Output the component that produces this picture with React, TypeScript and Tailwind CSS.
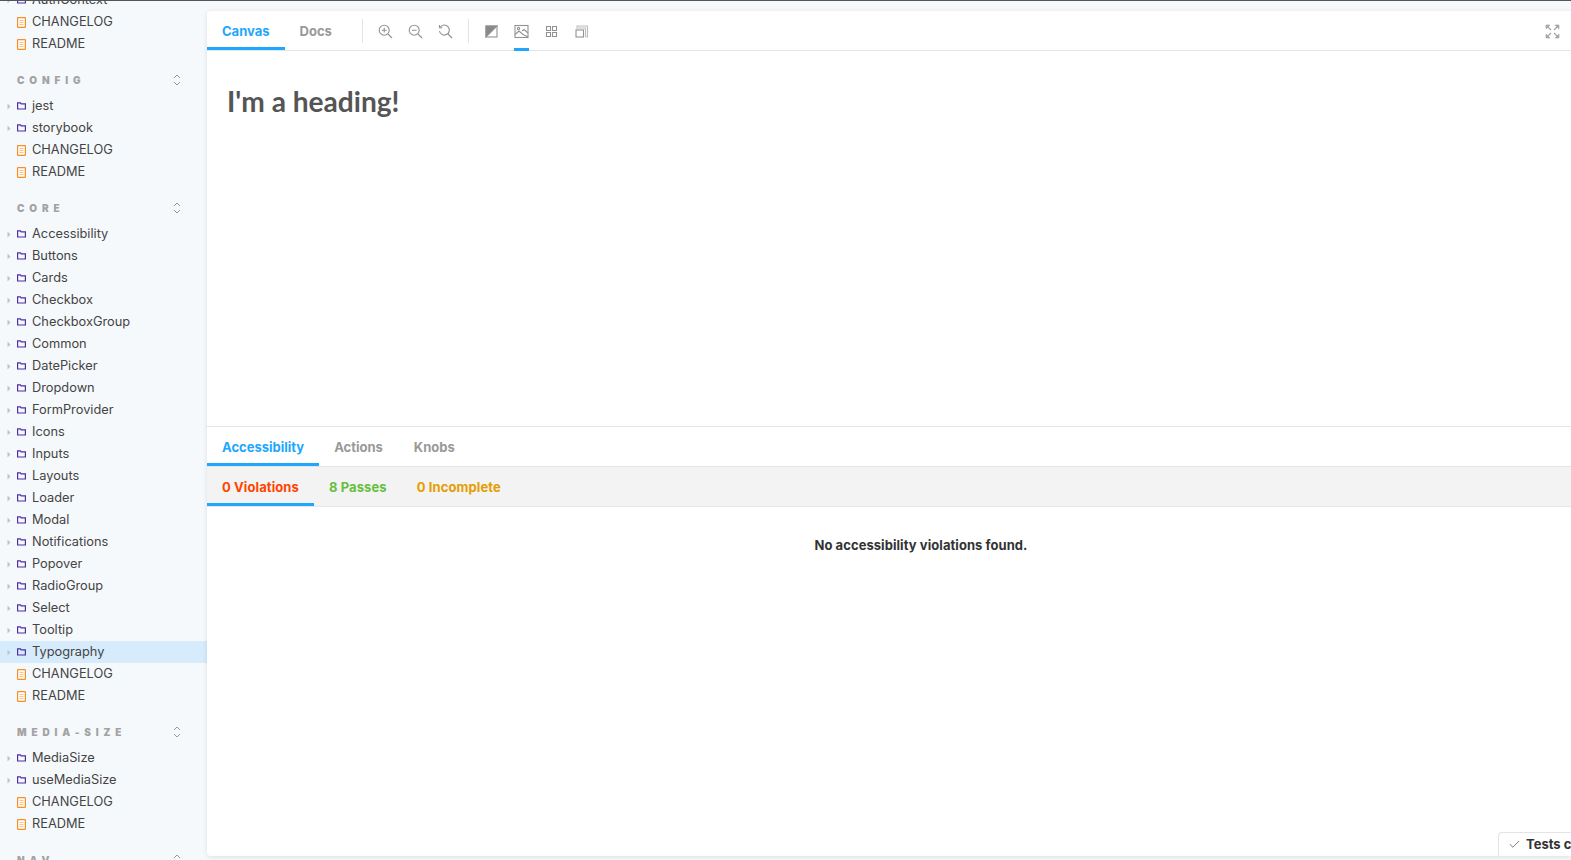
import React from "react";
import { Check } from "lucide-react";

const configItems = ["jest", "storybook"];
const coreItems = [
  "Accessibility", "Buttons", "Cards", "Checkbox", "CheckboxGroup", "Common", "DatePicker", "Dropdown",
  "FormProvider", "Icons", "Inputs", "Layouts", "Loader", "Modal", "Notifications", "Popover",
  "RadioGroup", "Select", "Tooltip", "Typography",
];
const mediaItems = ["MediaSize", "useMediaSize"];

const FolderRow = ({ name, active }: { name: string; active?: boolean }) => (
  <div className={`flex h-[22px] items-center ${active ? "bg-[#d6ebfb]" : ""}`}>
    <svg width="4" height="7" viewBox="0 0 4 7" className="ml-[7px] shrink-0">
      <path d="M0.5 0.5 L3.5 3.5 L0.5 6.5 Z" fill="#c4c4c4" />
    </svg>
    <svg width="9" height="8" viewBox="0 0 9 8" className="ml-[6px] shrink-0">
      <path d="M0.6 7 V0.8 H3.4 L4.2 1.9 H8.4 V7 Z" fill="none" stroke="#4f2ea8" strokeWidth="1.2" />
    </svg>
    <span className="ml-[6px] text-[12.8px] text-[#444]">{name}</span>
  </div>
);

const DocRow = ({ name }: { name: string }) => (
  <div className="flex h-[22px] items-center">
    <svg width="9" height="11" viewBox="0 0 9 11" className="ml-[17px] shrink-0">
      <rect x="0.6" y="0.6" width="7.8" height="9.8" rx="0.6" fill="#fff" stroke="#fb8c1e" strokeWidth="1.2" />
      <path d="M2.4 3.5 H6.6 M2.4 5.5 H6.6 M2.4 7.5 H6.6" stroke="#fbb26e" strokeWidth="0.8" />
    </svg>
    <span className="ml-[6px] text-[12.8px] text-[#444]">{name}</span>
  </div>
);

const SectionHead = ({ label }: { label: string }) => (
  <div className="flex h-[40px] items-center justify-between pl-[17px] pr-[26px] pt-[10px]">
    <span className="text-[10px] font-black uppercase tracking-[4.85px] text-[#a3a3a3]">{label}</span>
    <svg width="8" height="12" viewBox="0 0 8 12" fill="none" stroke="#999" strokeWidth="1">
      <path d="M1 4 L4 1 L7 4 M1 8 L4 11 L7 8" />
    </svg>
  </div>
);

const ToolIcon = ({ children, active }: { children: React.ReactNode; active?: boolean }) => (
  <div className={`flex h-[40px] w-[30px] items-center justify-center ${active ? "relative" : ""}`}>
    <svg width="15" height="15" viewBox="0 0 15 15" fill="none" stroke="#929292" strokeWidth="1.1">
      {children}
    </svg>
    {active && <div className="absolute bottom-0 left-[7px] h-[3px] w-[15px] bg-[#1ea7fd]" />}
  </div>
);

const Tab = ({ label, active, color, className }: { label: string; active?: boolean; color: string; className?: string }) => (
  <div
    className={`flex items-center border-y-[3px] border-t-transparent px-[15px] pt-[2px] text-[13px] font-bold ${
      active ? "border-b-[#1ea7fd]" : "border-b-transparent"
    } ${color} ${className ?? ""}`}
  >
    {label}
  </div>
);

export default function App() {
  return (
    <div className="relative flex h-[860px] w-full flex-col overflow-hidden bg-[#f6f9fc] [font-family:Inter,sans-serif]">
      <div className="h-px shrink-0 bg-[#555]" />
      <div className="flex min-h-0 flex-1">
        <aside className="w-[207px] shrink-0 overflow-hidden">
          <div className="mt-[-12px]">
            <FolderRow name="AuthContext" />
            <DocRow name="CHANGELOG" />
            <DocRow name="README" />
            <SectionHead label="Config" />
            {configItems.map((n) => (
              <FolderRow key={n} name={n} />
            ))}
            <DocRow name="CHANGELOG" />
            <DocRow name="README" />
            <SectionHead label="Core" />
            {coreItems.map((n) => (
              <FolderRow key={n} name={n} active={n === "Typography"} />
            ))}
            <DocRow name="CHANGELOG" />
            <DocRow name="README" />
            <SectionHead label="Media-size" />
            {mediaItems.map((n) => (
              <FolderRow key={n} name={n} />
            ))}
            <DocRow name="CHANGELOG" />
            <DocRow name="README" />
            <SectionHead label="Nav" />
          </div>
        </aside>

        <main className="mb-[4px] mt-[10px] flex min-w-0 flex-1 flex-col overflow-hidden rounded-l-[4px] bg-white shadow-[0_1px_5px_0_rgba(0,0,0,0.1)]">
          <div className="flex h-[40px] shrink-0 items-stretch border-b border-[#e4e4e4]">
            <Tab label="Canvas" active color="text-[#1ea7fd]" />
            <Tab label="Docs" color="text-[#999]" />
            <div className="ml-[15px] mr-[8px] mt-[8px] h-[24px] w-px bg-[#e4e4e4]" />
            <ToolIcon>
              <circle cx="6.2" cy="6.2" r="5" />
              <path d="M10 10 L14 14 M3.8 6.2 H8.6 M6.2 3.8 V8.6" />
            </ToolIcon>
            <ToolIcon>
              <circle cx="6.2" cy="6.2" r="5" />
              <path d="M10 10 L14 14 M3.8 6.2 H8.6" />
            </ToolIcon>
            <ToolIcon>
              <path d="M2.2 3.2 A5 5 0 1 1 1.4 7" />
              <path d="M1.5 1 V3.8 H4.3" />
              <path d="M10 10 L14 14" />
            </ToolIcon>
            <div className="ml-[7px] mr-[8px] mt-[8px] h-[24px] w-px bg-[#e4e4e4]" />
            <ToolIcon>
              <rect x="2" y="2" width="11" height="11" />
              <path d="M2 13 V2 H13 Z" fill="#888" />
            </ToolIcon>
            <ToolIcon active>
              <rect x="1" y="1.5" width="13" height="12" />
              <circle cx="4.5" cy="4.5" r="1.1" />
              <path d="M1 10.5 L5 7 L9 10.5 L14 13 M8 7 L10 5.5 L14 9" />
            </ToolIcon>
            <ToolIcon>
              <path d="M2.5 2.5 H6.5 V6.5 H2.5 Z M8.5 2.5 H12.5 V6.5 H8.5 Z M2.5 8.5 H6.5 V12.5 H2.5 Z M8.5 8.5 H12.5 V12.5 H8.5 Z" />
            </ToolIcon>
            <ToolIcon>
              <path d="M3 3 V2 H13.5 V13 H12" stroke="#bbb" />
              <rect x="2" y="6" width="7.5" height="7" />
              <path d="M2 4 H11.5 V13" stroke="#bbb" />
            </ToolIcon>
            <div className="ml-auto mr-[4px] flex h-[40px] w-[30px] items-center justify-center">
              <svg width="15" height="15" viewBox="0 0 15 15" fill="none" stroke="#a6a6a6" strokeWidth="1.2">
                <path d="M2 2 L6 6 M9 6 L13 2 M2 13 L6 9 M9 9 L13 13" />
                <path d="M1 5 V1 H5 Z M10 1 H14 V5 Z M1 10 V14 H5 Z M14 10 V14 H10 Z" fill="#a6a6a6" strokeWidth="0.6" />
              </svg>
            </div>
          </div>

          <div className="h-[376px] shrink-0 border-b border-[#e4e4e4] pl-[20px] pt-[30px]">
            <h1 className="text-[28.1px] font-bold leading-[40px] text-[#555] [font-family:Lato,sans-serif]">I'm a heading!</h1>
          </div>

          <div className="flex h-[40px] shrink-0 items-stretch border-b border-[#e4e4e4]">
            <Tab label="Accessibility" active color="text-[#1ea7fd]" />
            <Tab label="Actions" color="text-[#999]" />
            <Tab label="Knobs" color="text-[#999]" className="ml-px" />
          </div>

          <div className="flex h-[40px] shrink-0 items-stretch border-b border-[#e4e4e4] bg-[#f3f3f3]">
            <Tab label="0 Violations" active color="text-[#ff4400] tracking-[0.1px]" />
            <Tab label="8 Passes" color="text-[#66bf3c] tracking-[0.1px]" />
            <Tab label="0 Incomplete" color="text-[#e69d00] tracking-[0.1px]" />
          </div>

          <div className="w-[1428px] pt-[29px] text-center text-[13px] font-bold tracking-[0.06px] text-[#333]">
            No accessibility violations found.
          </div>
        </main>
      </div>

      <div className="absolute bottom-[4px] left-[1498px] flex h-[24px] w-[200px] items-center rounded-tl-[4px] border-l border-t border-[#e4e4e4] bg-white pl-[9px] text-[13px] font-bold text-[#333]">
        <Check size={13} strokeWidth={1.2} className="mr-[5px]" />
        Tests completed
      </div>
    </div>
  );
}
